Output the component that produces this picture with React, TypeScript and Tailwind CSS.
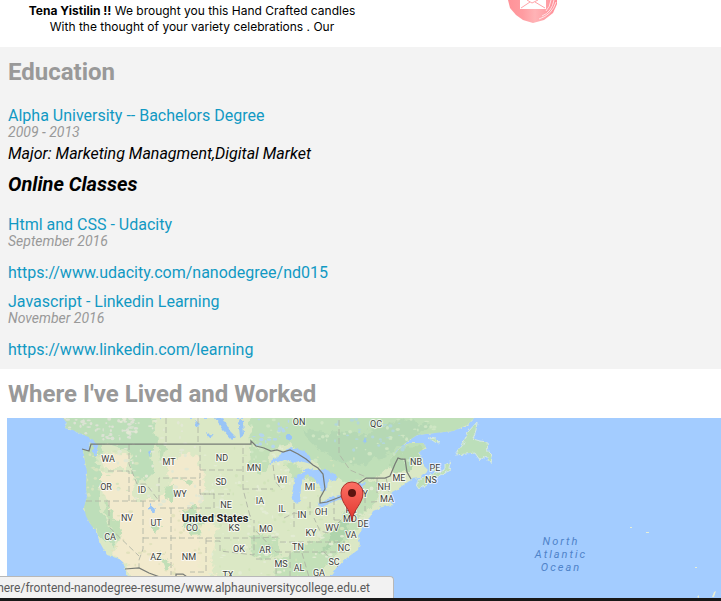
type Label = [string, number, number];

const states: Label[] = [
  ["ON", 299, 422], ["QC", 376, 424], ["WA", 108, 459], ["MT", 169, 462],
  ["ND", 222, 458], ["MN", 254, 468], ["SD", 221, 482], ["WI", 282, 480],
  ["MI", 310, 487], ["OR", 106, 487], ["ID", 142, 490], ["WY", 180, 494],
  ["NE", 226, 505], ["IA", 260, 501], ["IL", 282, 509], ["IN", 302, 515],
  ["OH", 321, 512], ["NV", 127, 518], ["UT", 156, 523], ["CO", 192, 528],
  ["KS", 234, 528], ["MO", 266, 529], ["KY", 311, 533], ["WV", 332, 528],
  ["CA", 110, 537], ["AZ", 156, 557], ["NM", 189, 557], ["OK", 239, 549],
  ["AR", 265, 550], ["TN", 298, 547], ["MS", 281, 564], ["AL", 299, 568],
  ["GA", 319, 573], ["TX", 228, 575], ["SC", 334, 562], ["NC", 344, 548],
  ["VA", 351, 535], ["DE", 363, 524], ["MD", 350, 519], ["PA", 351, 510],
  ["NY", 362, 494], ["MA", 387, 499], ["NH", 384, 487], ["ME", 399, 478],
  ["NB", 416, 462], ["PE", 435, 468], ["NS", 431, 480],
];

const land =
  "M63 418L67 423L65 428L73 430L84 436L90 442L89 450L83 450L85 461L87 472L86 485L87 497L84 507L86 516L91 525L97 532L99 541L104 550L107 555L117 557L123 562L125 569L128 577L138 604H320L326 582L330 577L337 567L348 557L358 550L360 544L358 536L361 531L363 525L370 517L373 511L382 507L393 505L389 500L392 492L401 487L412 479L420 478L428 470L423 465L422 459L418 453L426 447L423 443L410 443L400 448L392 457L388 462L397 450L408 441L417 435L435 433L453 431L467 425L474 418Z";

// Fixed seed keeps the terrain identical on every render.
function scatter(seed: number, count: number, x0: number, y0: number, w: number, h: number) {
  let s = seed;
  const next = () => {
    s = (s * 16807) % 2147483647;
    return s / 2147483647;
  };
  return Array.from({ length: count }, () => ({
    x: x0 + next() * w,
    y: y0 + next() * h,
    rx: 0.6 + next() * 2,
    ry: 0.5 + next() * 1.4,
  }));
}

type PatchProps = { seed: number; count: number; area: [number, number, number, number]; fill: string };

function Patches({ seed, count, area, fill }: PatchProps) {
  return (
    <g fill={fill}>
      {scatter(seed, count, ...area).map((p, i) => (
        <ellipse key={i} cx={p.x} cy={p.y} rx={p.rx} ry={p.ry} />
      ))}
    </g>
  );
}

function WorldMap() {
  return (
    <svg
      className="block h-[180px] w-full bg-[#a3ccff] font-['Roboto',sans-serif]"
      viewBox="7 418 714 180"
      preserveAspectRatio="xMinYMin slice"
      role="img"
      aria-label="Map of places lived and worked"
    >
      <defs>
        <clipPath id="land"><path d={land} /></clipPath>
        <filter id="rough" x="0" y="0" width="100%" height="100%">
          <feTurbulence type="fractalNoise" baseFrequency="0.13" numOctaves="3" seed="4" />
          <feDisplacementMap in="SourceGraphic" scale="11" xChannelSelector="R" yChannelSelector="G" />
        </filter>
        <filter id="shore" x="0" y="0" width="100%" height="100%">
          <feTurbulence type="fractalNoise" baseFrequency="0.25" numOctaves="2" seed="8" />
          <feDisplacementMap in="SourceGraphic" scale="4" xChannelSelector="R" yChannelSelector="G" />
        </filter>
        <linearGradient id="pin" x1="0" y1="0" x2="0" y2="1">
          <stop offset="0" stopColor="#fc6f64" />
          <stop offset="1" stopColor="#e0372e" />
        </linearGradient>
      </defs>

      <g filter="url(#shore)">
        <path d={land} fill="#dbe8c5" />
      </g>
      <g clipPath="url(#land)">
        <g filter="url(#rough)">
          <path d="M50 405H150L157 440L150 455L155 470L145 480L137 484L132 470L128 450L105 443L98 460L103 485L97 500L105 520L116 535L114 548L95 530L75 520V450L55 430Z" fill="#bddeb9" />
          <path d="M250 405H490V440L400 457L380 475L350 485L328 474L308 458L290 443L270 451L252 443Z" fill="#bfdfb8" />
          <path d="M100 454L127 453L128 468L104 468ZM102 472L134 473L133 500L157 500L170 484L166 460L190 453L205 470L203 500L196 520L205 570L195 604H148L125 566L112 552L121 540L111 516L107 498L100 484Z" fill="#f2eacd" />
          <path d="M200 520L218 525L214 545L211 562L216 575L200 580Z" fill="#efebcb" />
          <path d="M107 500L112 515L122 530L118 543L110 525L104 513ZM183 510L193 506L204 517L200 534L190 535L184 525ZM168 485L176 492L170 500L164 495ZM181 478L192 481L190 487ZM157 440L168 450L160 462ZM158 552L166 558L172 567L165 570ZM153 520L159 530L153 536Z" fill="#c1dfb7" />
          <path d="M250 445L270 450L268 466L260 473L251 465ZM282 465L295 463L304 472L295 480ZM307 472L318 477L314 480L303 476ZM248 537L275 535L281 547L278 556L263 561L250 555ZM277 558L321 538L335 530L345 512L366 482L380 478L377 500L361 515L352 535L339 550L323 570L310 582H276Z" fill="#c3e0b8" />
          <path d="M335 525L350 510L347 532L335 545L318 554L329 540Z" fill="#afd4ac" />
          <path d="M300 430L360 434L405 418L430 426L389 454L362 466L340 462L320 451Z" fill="#b5d8b4" />
          <path d="M389 460L408 446L423 448L410 471L394 476Z" fill="#b7d9b1" />
        </g>
        <Patches seed={71} count={65} area={[64, 418, 72, 23]} fill="#dce2d4" />
        <Patches seed={51} count={35} area={[80, 445, 58, 58]} fill="#d6e4bf" />
        <Patches seed={19} count={70} area={[118, 418, 85, 90]} fill="#e2e8d4" />
        <Patches seed={22} count={45} area={[110, 508, 90, 75]} fill="#e2e2bd" />
        <Patches seed={31} count={90} area={[205, 445, 90, 132]} fill="#e3ecd3" />
        <Patches seed={45} count={75} area={[220, 448, 140, 129]} fill="#d2e4bb" />
        <Patches seed={88} count={60} area={[250, 418, 190, 45]} fill="#cee6c3" />
        <Patches seed={62} count={45} area={[305, 486, 80, 75]} fill="#e0ebd2" />
        <g fill="#99c5f7" filter="url(#shore)">
          <path d="M215 418L223 418L230 431L236 437L232 440L222 429ZM238 419L243 421L244 434L240 437L239 427ZM195 420L200 424L196 428ZM206 432L213 436L208 438ZM149 503L156 509L154 513L149 509ZM148 452L151 450L150 456ZM287 434L291 434L291 441L286 439ZM365 437L367 443L363 442Z" />
        </g>
        <Patches seed={96} count={20} area={[254, 419, 35, 28]} fill="#b5d5ed" />
        <Patches seed={28} count={28} area={[335, 419, 70, 32]} fill="#b3d7da" />
      </g>

      <g fill="#a3ccff" filter="url(#shore)">
        <path d="M79 432L90 438L98 445L96 457L93 452L93 444L86 440Z" />
        <path d="M268 464L281 454L291 447L304 451L310 456L311 464L300 461L293 463L286 460Z" />
        <path d="M296 475L303 472L310 471L304 478L301 486L300 502L294 503L292 493L294 482Z" />
        <path d="M303 470L315 469L326 470L337 475L337 481L328 480L327 489L322 492L319 484L315 480L310 475Z" />
        <path d="M318 504L327 499L340 495L345 492L343 498L328 504L320 507ZM341 491L352 485L366 483L361 490L348 493Z" />
      </g>

      <g filter="url(#shore)" stroke="#d6e9df">
        <path d="M477 422L468 432L462 446L455 455L465 454L475 453L480 460L486 456L491 464L492 456L488 452L487 442L480 441L473 439L476 430Z" fill="#bcdfba" />
        <path d="M416 485L420 479L427 476L433 474L445 470L445 465L450 462L449 468L451 470L440 475L427 484L419 489Z" fill="#bfe0b8" />
        <path d="M428 438L436 439L440 443L434 442ZM431 468L440 469L436 472Z" fill="#bfe0b8" />
      </g>

      <g fill="none" stroke="#aeb3a5" strokeWidth="1" strokeDasharray="6 3" opacity=".85">
        <path d="M166 418V444M198 418V444M108 471H129V501M86 501H160M109 501V527L139 556M129 444V464L137 484L146 484L159 501V478H200V444M200 470H243M200 494H230M160 508H214V494H200V478M171 508V575M143 501V549L139 560L139 568M143 538H254M206 538V572H190M214 516H251M206 541H220V551L254 555V520M243 448V489L251 520M243 489H273M273 465L275 481L282 490M254 538L278 537M256 559H276M276 559V577M284 518L294 513L302 514M294 503V530M310 502V515M334 499V520M276 552H347M280 542H345M302 553L309 577M290 553V577M324 552L338 567M334 520H365M347 497H365V511M377 478V496M386 477L389 493M339 420V454L350 470L366 477M371 502L389 501M341 520L328 533L320 531L314 518M256 531L276 552" />
      </g>

      <g fill="none" stroke="#777b76" strokeWidth="1.25">
        <path d="M82 449L89 451L91 444H251L251 441L256 446L264 448L271 451L277 450L283 452L290 450L298 454L306 459L313 465L318 468L323 474L325 489L320 498L320 503L327 502L340 497L346 493L359 483L366 478H385L390 476L395 464L398 458L401 459L405 459L407 472L411 479" />
        <path d="M125 569L139 568L149 573L160 577H176V574L183 574L190 579" />
      </g>

      <g className="text-[9px]" textAnchor="middle" fill="#3c403a" stroke="#ffffff" strokeWidth="2" strokeOpacity=".75" paintOrder="stroke" strokeLinejoin="round">
        {states.map(([name, x, y]) => (
          <text key={name} x={x} y={y + 3}>{name}</text>
        ))}
        <text x="215" y="522" className="text-[11px] font-bold" fill="#202020">United States</text>
      </g>

      <g className="text-[11px] italic tracking-[2px]" textAnchor="middle" fill="#4f83c9">
        <text x="561" y="545">North</text>
        <text x="561" y="558">Atlantic</text>
        <text x="561" y="571">Ocean</text>
      </g>
      <g fill="#e8efd5">
        <path d="M630 527h2v1h-2zM646 532h3v1h-3zM695 567h2v1h-2zM697 597l2-2v3zM712 597l2-5 2-1-2 6z" />
      </g>

      <path d="M352 521C351 509 341 504 341 493A11 11 0 0 1 363 493C363 504 353 509 352 521Z" fill="url(#pin)" stroke="#aa302b" strokeWidth="1" />
      <circle cx="352" cy="493" r="4" fill="#5b1410" />
    </svg>
  );
}

function MailBadge() {
  return (
    <svg className="block h-6 w-[52px]" viewBox="506 0 52 24" aria-hidden="true">
      <defs>
        <linearGradient id="wash" x1="0" x2="1">
          <stop offset="0" stopColor="#ff9298" />
          <stop offset=".3" stopColor="#ff9ca1" />
          <stop offset=".55" stopColor="#ffb3b6" />
          <stop offset="1" stopColor="#ff8d96" />
        </linearGradient>
      </defs>
      <path d="M508 0L510 8L516 15L523 20L533 23L544 20L553 13L557 4V0Z" fill="url(#wash)" />
      <path d="M554 0Q552 12 542 16M556 2Q552 15 539 19M551 0Q550 7 546 11" fill="none" stroke="#ffe1e4" strokeWidth="1" />
      <path d="M520 0H546V9H520Z" fill="#fff" />
      <path d="M527 0L532 3L538 0M521 8L530 2M545 8L535 2" fill="none" stroke="#ffa5aa" strokeWidth="1" />
    </svg>
  );
}

type Course = { title: string; date: string; url: string };

const courses: Course[] = [
  { title: "Html and CSS - Udacity", date: "September 2016", url: "https://www.udacity.com/nanodegree/nd015" },
  { title: "Javascript - Linkedin Learning", date: "November 2016", url: "https://www.linkedin.com/learning" },
];

export default function App() {
  return (
    <div className="relative min-h-screen overflow-hidden bg-white font-['Roboto',sans-serif] text-base text-black">
      <header className="flex h-[47px] items-start">
        <p className="w-96 shrink-0 pt-[3px] text-center font-['Comic_Sans_MS','Inter',sans-serif] text-xs leading-4">
          <b>Tena Yistilin !!</b> We brought you this Hand Crafted candles
          <br />
          With the thought of your variety celebrations . Our
        </p>
        <div className="ml-[122px]"><MailBadge /></div>
      </header>

      <section className="bg-[#f3f3f3] px-2 pt-[11px] pb-[9px]">
        <h2 className="text-2xl leading-7 font-bold text-[#999]">Education</h2>
        <a href="#alpha" className="mt-[22px] block leading-4 text-[#1199c3]">Alpha University -- Bachelors Degree</a>
        <p className="text-sm leading-4 text-[#999] italic">2009 - 2013</p>
        <p className="pt-1 leading-5 italic">Major: Marketing Managment,Digital Market</p>
        <h3 className="mt-2 mb-[21px] text-xl leading-6 font-bold italic">Online Classes</h3>
        <div className="flex flex-col gap-[11px]">
          {courses.map((course) => (
            <article key={course.url}>
              <a href={course.url} className="block leading-4 text-[#1199c3]">{course.title}</a>
              <p className="text-sm leading-4 text-[#999] italic">{course.date}</p>
              <a href={course.url} className="mt-3.5 block leading-5 text-[#1199c3]">{course.url}</a>
            </article>
          ))}
        </div>
      </section>

      <section>
        <h2 className="px-2 pt-[11px] pb-2.5 text-2xl leading-7 font-bold text-[#999]">Where I've Lived and Worked</h2>
        <div className="pl-[7px]"><WorldMap /></div>
      </section>
      <footer className="h-[3px] bg-[#181818]" />

      <div className="absolute bottom-[3px] left-0 flex h-[22px] w-[394px] items-center justify-end overflow-hidden rounded-tr border-t border-r border-[#b8b8b8] bg-[#f2f2f2] pr-[23px] font-['Segoe_UI','Roboto',sans-serif] text-xs whitespace-nowrap text-[#5a5a5a]">
        here/frontend-nanodegree-resume/www.alphauniversitycollege.edu.et
      </div>
    </div>
  );
}
